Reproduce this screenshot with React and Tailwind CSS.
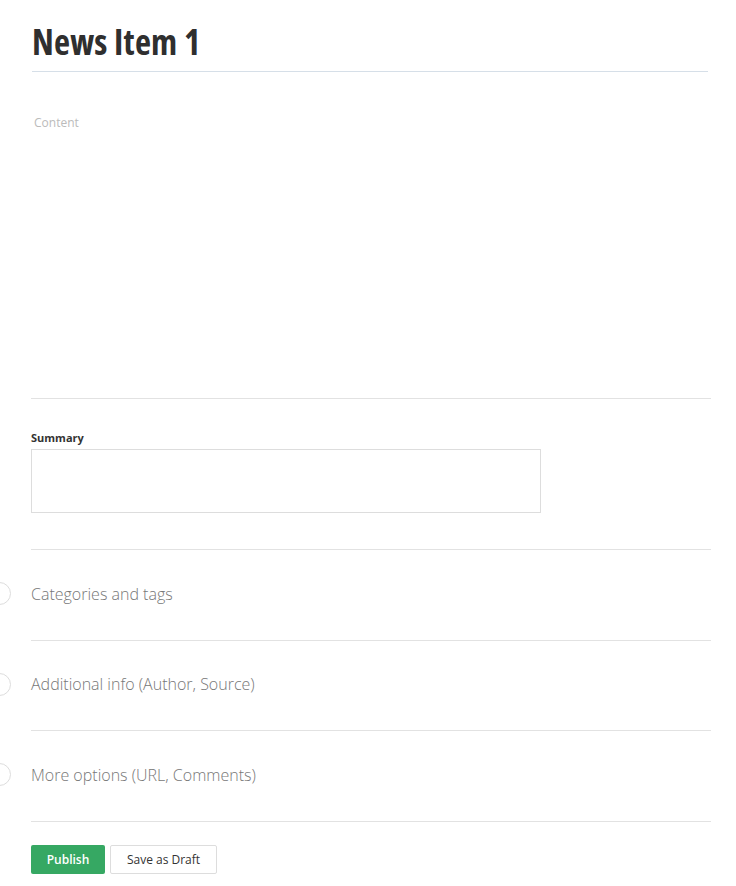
export default function App() {
  const sections = [
    ["Categories and tags", "h-[90px]"],
    ["Additional info (Author, Source)", "h-[89px]"],
    ["More options (URL, Comments)", "h-[90px]"],
  ];
  return (
    <div className="relative w-[736px] h-[886px] bg-white overflow-hidden" style={{ fontFamily: '"Open Sans", sans-serif' }}>
      <div className="pl-[31px] pr-[25px]">
        <div className="pt-[21px] pl-px pr-[3px]">
          <h1 className="text-[35px] leading-[41px] font-bold text-[#2f2f2f] tracking-[0.2px]" style={{ fontStretch: "75%" }}>News Item 1</h1>
          <div className="mt-[9px] h-px bg-[#d6dfe8]" />
        </div>
        <div className="h-[326px] pt-[37px] pl-[3px]">
          <span className="text-[12px] text-[#bbbbbb]">Content</span>
        </div>
        <div className="h-px bg-[#e2e2e2]" />
        <div className="pt-[31px] pb-[36px]">
          <div className="text-[11px] font-bold text-[#333] leading-[16px]">Summary</div>
          <div className="mt-[3px] w-[510px] h-[64px] border border-[#dddddd]" />
        </div>
        {sections.map(([s, h]) => (
          <div key={s}>
            <div className="h-px bg-[#e2e2e2]" />
            <div className={`relative ${h} flex items-center`}>
              <div className="absolute left-[-43px] top-[32px] w-[23px] h-[23px] rounded-full border border-[#dddddd]" />
              <span className="text-[16px] font-light text-[#777] leading-[22px] -mt-[3px]">{s}</span>
            </div>
          </div>
        ))}
        <div className="h-px bg-[#e2e2e2]" />
        <div className="pt-[23px] flex gap-[5px]">
          <button className="w-[74px] h-[29px] rounded-[2px] bg-[#36a863] text-white text-[12px] font-semibold">Publish</button>
          <button className="w-[107px] h-[29px] rounded-[2px] border border-[#dddddd] bg-white text-[#333] text-[12px]">Save as Draft</button>
        </div>
      </div>
    </div>
  );
}
